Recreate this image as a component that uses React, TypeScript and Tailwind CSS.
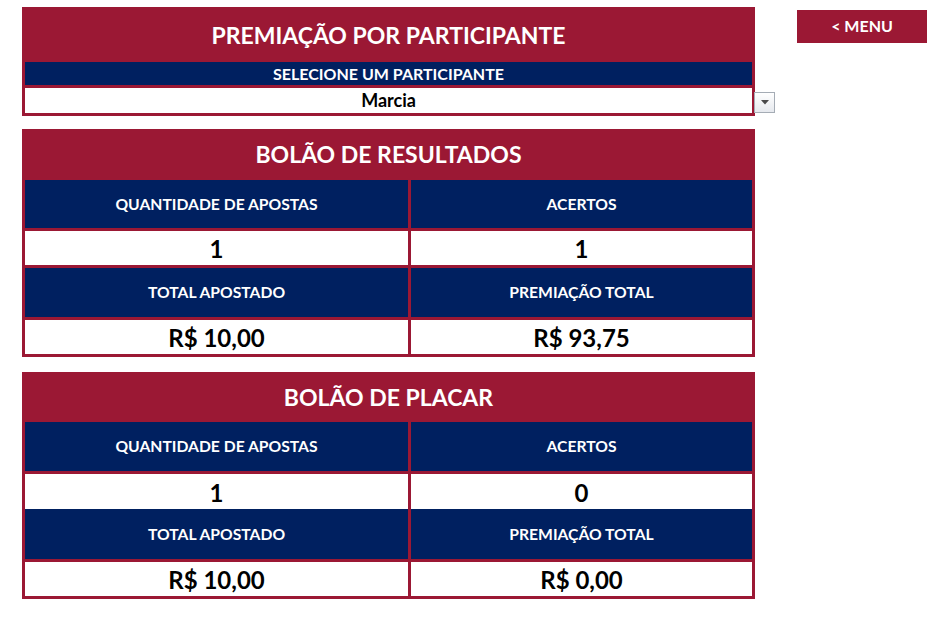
const RED = "bg-[#9b1834]"

type Pair = { label: string; value: string }

function LabelRow({ left, right, h }: { left: string; right: string; h: string }) {
  return (
    <div className="grid grid-cols-[383px_341px] gap-x-[3px]">
      <div className={`${h} bg-[#002060] flex items-center justify-center text-white font-bold text-[15.7px] pt-[1px]`}>{left}</div>
      <div className={`${h} bg-[#002060] flex items-center justify-center text-white font-bold text-[15.7px] pt-[1px]`}>{right}</div>
    </div>
  )
}

function ValueRow({ left, right, h }: { left: string; right: string; h: string }) {
  return (
    <div className="grid grid-cols-[383px_341px] gap-x-[3px]">
      <div className={`${h} bg-white flex items-center justify-center text-black font-bold text-[24px] pt-[2px]`}>{left}</div>
      <div className={`${h} bg-white flex items-center justify-center text-black font-bold text-[24px] pt-[2px]`}>{right}</div>
    </div>
  )
}

function Bolao({ title, top, bottom, titleH, split }: { title: string; top: Pair[]; bottom: Pair[]; titleH: string; split?: boolean }) {
  return (
    <div className={`${RED} px-[3px] pb-[3px] flex flex-col`}>
      <div className={`${titleH} flex items-center justify-center text-white font-bold text-[23px]`}>{title}</div>
      <LabelRow left={top[0].label} right={top[1].label} h={split ? "h-[49px]" : "h-[48px]"} />
      <div className="mt-[3px]">
        <ValueRow left={top[0].value} right={top[1].value} h={split ? "h-[35px]" : "h-[34px]"} />
      </div>
      <div className={split ? "" : "mt-[3px]"}>
        <LabelRow left={bottom[0].label} right={bottom[1].label} h={split ? "h-[50px]" : "h-[49px]"} />
      </div>
      <div className="mt-[3px]">
        <ValueRow left={bottom[0].value} right={bottom[1].value} h="h-[34px]" />
      </div>
    </div>
  )
}

export default function App() {
  return (
    <div className="w-[945px] h-[638px] bg-white flex items-start pl-[22px] pt-[7px]" style={{ fontFamily: "Lato, 'Open Sans', sans-serif" }}>
      <div className="w-[733px] flex flex-col">
        {/* seletor */}
        <div className={`relative ${RED} px-[3px] pb-[3px] flex flex-col`}>
          <div className="h-[55px] flex items-center justify-center text-white font-bold text-[23px] pt-[1px]">
            PREMIAÇÃO POR PARTICIPANTE
          </div>
          <div className="h-[23px] bg-[#002060] flex items-center justify-center text-white font-bold text-[16px] pt-[1px]">
            SELECIONE UM PARTICIPANTE
          </div>
          <div className="mt-[3px] h-[25px] bg-white flex items-center justify-center text-black font-bold text-[18px]">
            Marcia
          </div>
          <div className="absolute left-[732px] top-[85px] w-[21px] h-[21px] border border-[#a5acb5] bg-gradient-to-b from-white to-[#e6e9ee] flex items-center justify-center">
            <svg width="8" height="5" viewBox="0 0 8 5">
              <path d="M0 0h8L4 4.5z" fill="#4a4a4a" />
            </svg>
          </div>
        </div>

        <div className="mt-[13px]">
          <Bolao
            title="BOLÃO DE RESULTADOS"
            titleH="h-[51px]"
            top={[{ label: "QUANTIDADE DE APOSTAS", value: "1" }, { label: "ACERTOS", value: "1" }]}
            bottom={[{ label: "TOTAL APOSTADO", value: "R$ 10,00" }, { label: "PREMIAÇÃO TOTAL", value: "R$ 93,75" }]}
          />
        </div>

        <div className="mt-[15px]">
          <Bolao
            title="BOLÃO DE PLACAR"
            titleH="h-[50px]"
            split
            top={[{ label: "QUANTIDADE DE APOSTAS", value: "1" }, { label: "ACERTOS", value: "0" }]}
            bottom={[{ label: "TOTAL APOSTADO", value: "R$ 10,00" }, { label: "PREMIAÇÃO TOTAL", value: "R$ 0,00" }]}
          />
        </div>
      </div>

      <button className={`ml-[42px] mt-[3px] w-[130px] h-[33px] ${RED} text-white font-bold text-[16px] flex items-center justify-center pb-[1px]`}>
        &lt; MENU
      </button>
    </div>
  )
}
